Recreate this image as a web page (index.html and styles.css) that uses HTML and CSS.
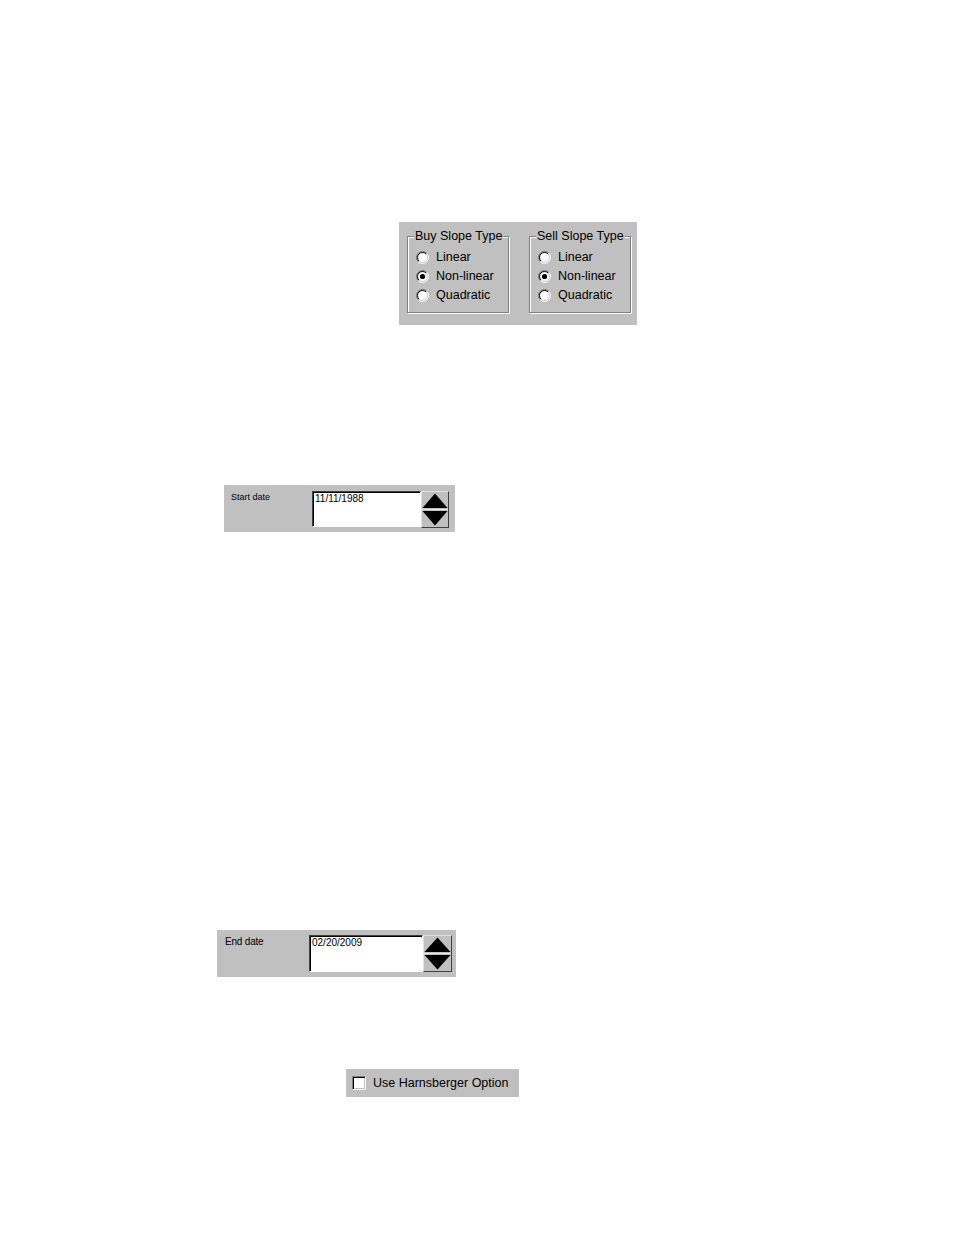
FILE: index.html
```html
<!DOCTYPE html>
<html>
<head>
<meta charset="utf-8">
<link rel="stylesheet" href="styles.css">
</head>
<body>
<svg class="defs" width="0" height="0" aria-hidden="true">
  <defs>
    <linearGradient id="outerRing" x1="0" y1="0" x2="1" y2="1">
      <stop offset="0.45" stop-color="#707070"/>
      <stop offset="0.55" stop-color="#ffffff"/>
    </linearGradient>
    <linearGradient id="innerRing" x1="0" y1="0" x2="1" y2="1">
      <stop offset="0.45" stop-color="#000000"/>
      <stop offset="0.55" stop-color="#d0d0d0"/>
    </linearGradient>
  </defs>
</svg>
<div class="page">
  <div class="slope-panel">
    <div class="group">
      <span class="group-title">Buy Slope Type</span>
      <div class="option">
        <svg class="radio" viewBox="0 0 13 13"><circle cx="6.5" cy="6.5" r="6" fill="none" stroke="url(#outerRing)"/><circle cx="6.5" cy="6.5" r="5" fill="#fff" stroke="url(#innerRing)"/></svg>
        <span>Linear</span>
      </div>
      <div class="option">
        <svg class="radio" viewBox="0 0 13 13"><circle cx="6.5" cy="6.5" r="6" fill="none" stroke="url(#outerRing)"/><circle cx="6.5" cy="6.5" r="5" fill="#fff" stroke="url(#innerRing)"/><circle cx="6.5" cy="6.5" r="2.6" fill="#000"/></svg>
        <span>Non-linear</span>
      </div>
      <div class="option">
        <svg class="radio" viewBox="0 0 13 13"><circle cx="6.5" cy="6.5" r="6" fill="none" stroke="url(#outerRing)"/><circle cx="6.5" cy="6.5" r="5" fill="#fff" stroke="url(#innerRing)"/></svg>
        <span>Quadratic</span>
      </div>
    </div>
    <div class="group">
      <span class="group-title">Sell Slope Type</span>
      <div class="option">
        <svg class="radio" viewBox="0 0 13 13"><circle cx="6.5" cy="6.5" r="6" fill="none" stroke="url(#outerRing)"/><circle cx="6.5" cy="6.5" r="5" fill="#fff" stroke="url(#innerRing)"/></svg>
        <span>Linear</span>
      </div>
      <div class="option">
        <svg class="radio" viewBox="0 0 13 13"><circle cx="6.5" cy="6.5" r="6" fill="none" stroke="url(#outerRing)"/><circle cx="6.5" cy="6.5" r="5" fill="#fff" stroke="url(#innerRing)"/><circle cx="6.5" cy="6.5" r="2.6" fill="#000"/></svg>
        <span>Non-linear</span>
      </div>
      <div class="option">
        <svg class="radio" viewBox="0 0 13 13"><circle cx="6.5" cy="6.5" r="6" fill="none" stroke="url(#outerRing)"/><circle cx="6.5" cy="6.5" r="5" fill="#fff" stroke="url(#innerRing)"/></svg>
        <span>Quadratic</span>
      </div>
    </div>
  </div>

  <div class="date-panel start-panel">
    <div class="date-label small">Start date</div>
    <div class="date-input small-input">11/11/1988</div>
    <div class="spinner">
      <svg viewBox="0 0 26 35" preserveAspectRatio="none" class="spin-icon">
        <polygon points="13,1.5 0.5,16 25.5,16" fill="#000"/>
        <line x1="0" y1="17.5" x2="26" y2="17.5" stroke="#e8e8e8" stroke-width="1"/>
        <polygon points="0.5,19 25.5,19 13,33.5" fill="#000"/>
      </svg>
    </div>
  </div>

  <div class="date-panel end-panel">
    <div class="date-label">End date</div>
    <div class="date-input">02/20/2009</div>
    <div class="spinner">
      <svg viewBox="0 0 27 35" preserveAspectRatio="none" class="spin-icon">
        <polygon points="13.5,1.5 0.5,16 26.5,16" fill="#000"/>
        <line x1="0" y1="17.5" x2="27" y2="17.5" stroke="#e8e8e8" stroke-width="1"/>
        <polygon points="0.5,19 26.5,19 13.5,33.5" fill="#000"/>
      </svg>
    </div>
  </div>

  <div class="check-panel">
    <span class="checkbox"></span>
    <span>Use Harnsberger Option</span>
  </div>
</div>
</body>
</html>
```

FILE: styles.css
```css
html, body {
  margin: 0;
  padding: 0;
  background: #ffffff;
}

.defs {
  position: absolute;
  width: 0;
  height: 0;
  overflow: hidden;
}

.page {
  padding-top: 222px;
  font-family: "Liberation Sans", Arial, sans-serif;
  color: #000;
}

/* ---------- slope type panel ---------- */
.slope-panel {
  margin-left: 399px;
  width: 238px;
  height: 103px;
  box-sizing: border-box;
  background: #c0c0c0;
  padding: 14px 0 0 8px;
  display: flex;
  gap: 20px;
  align-items: flex-start;
}

.group {
  position: relative;
  width: 102px;
  height: 77px;
  box-sizing: border-box;
  border: 1px solid #808080;
  box-shadow: inset 1px 1px 0 #ffffff, 1px 1px 0 #ffffff;
  padding: 11px 0 0 8px;
  font-size: 12.5px;
}

.group-title {
  position: absolute;
  top: -8px;
  left: 6px;
  padding: 0 1px;
  background: #c0c0c0;
  line-height: 14px;
  white-space: nowrap;
}

.option {
  display: flex;
  align-items: center;
  gap: 7px;
  height: 19px;
  line-height: 19px;
  white-space: nowrap;
}

.radio {
  flex: none;
  width: 13px;
  height: 13px;
  display: block;
}

/* ---------- date panels ---------- */
.date-panel {
  background: #c0c0c0;
  height: 47px;
  box-sizing: border-box;
  display: flex;
  align-items: flex-start;
}

.start-panel {
  margin-top: 160px;
  margin-left: 224px;
  width: 231px;
  padding: 6px 0 0 7px;
}

.end-panel {
  margin-top: 398px;
  margin-left: 217px;
  width: 239px;
  padding: 5px 0 0 8px;
}

.date-label {
  font-size: 10px;
  line-height: 12px;
  padding-top: 1px;
  letter-spacing: -0.2px;
  width: 84px;
  flex: none;
}

.date-label.small {
  font-size: 9px;
  line-height: 11px;
  width: 81px;
  padding-top: 1px;
  letter-spacing: 0;
}

.date-input {
  flex: none;
  width: 114px;
  height: 37px;
  box-sizing: border-box;
  background: #ffffff;
  border-style: solid;
  border-width: 1px;
  border-color: #404040 #ffffff #ffffff #404040;
  box-shadow: inset 1px 1px 0 #000000;
  padding: 1px 2px;
  font-size: 10px;
  line-height: 12px;
}

.date-input.small-input {
  width: 109px;
  height: 36px;
}

.spinner {
  flex: none;
  width: 29px;
  height: 37px;
  box-sizing: border-box;
  background: #c0c0c0;
  border: 1px solid;
  border-color: #e0e0e0 #404040 #404040 #e0e0e0;
  display: flex;
}

.start-panel .spinner {
  width: 28px;
}

.spin-icon {
  width: 100%;
  height: 100%;
  display: block;
}

/* ---------- checkbox panel ---------- */
.check-panel {
  margin-top: 92px;
  margin-left: 346px;
  width: 173px;
  height: 28px;
  box-sizing: border-box;
  background: #c0c0c0;
  padding-left: 6px;
  display: flex;
  align-items: center;
  gap: 7px;
  font-size: 12.5px;
  white-space: nowrap;
}

.checkbox {
  flex: none;
  width: 14px;
  height: 14px;
  box-sizing: border-box;
  background: #ffffff;
  border: 1px solid;
  border-color: #808080 #ffffff #ffffff #808080;
  box-shadow: inset 1px 1px 0 #000000, inset -1px -1px 0 #c0c0c0;
}
```
